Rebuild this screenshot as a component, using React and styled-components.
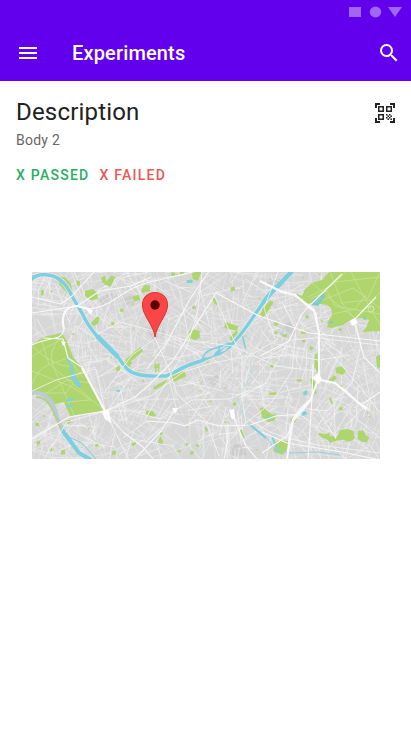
import React from "react";
import styled, { createGlobalStyle } from "styled-components";

const GlobalStyle = createGlobalStyle`
  *, *::before, *::after { box-sizing: border-box; }
  body {
    margin: 0;
    background: #ffffff;
    font-family: Roboto, "Liberation Sans", sans-serif;
  }
`;

const AppHeader = styled.header`
  background: #6200ee;
  color: #ffffff;
`;

const StatusBar = styled.div`
  display: flex;
  justify-content: flex-end;
  align-items: center;
  height: 24px;
  padding-right: 9px;
`;

const Toolbar = styled.div`
  display: flex;
  align-items: center;
  height: 57px;
  padding: 0 10px 0 16px;
`;

const IconButton = styled.button`
  display: flex;
  flex: none;
  padding: 0;
  border: 0;
  background: none;
  color: inherit;
  cursor: pointer;
`;

const Icon = styled.svg`
  display: block;
  width: 24px;
  height: 24px;
  fill: currentColor;
`;

const Title = styled.h1`
  flex: 1;
  margin: 0 0 0 32px;
  font-size: 20px;
  line-height: 24px;
  font-weight: 500;
  letter-spacing: 0.15px;
`;

const Summary = styled.section`
  display: flex;
  align-items: flex-start;
  justify-content: space-between;
  padding: 15px 14px 0 16px;
  color: #212121;
`;

const ScanButton = styled(IconButton)`
  margin-top: 5px;
`;

const Heading = styled.h2`
  margin: 0;
  font-size: 24px;
  line-height: 32px;
  font-weight: 400;
  letter-spacing: 0.18px;
`;

const Body = styled.p`
  margin: 2px 0 0;
  font-size: 14px;
  line-height: 20px;
  letter-spacing: 0.25px;
  color: #666666;
`;

const Results = styled.div`
  display: flex;
  gap: 10px;
  margin-top: 17px;
`;

const Result = styled.span`
  font-size: 14px;
  line-height: 16px;
  font-weight: 500;
  letter-spacing: 1.25px;
  color: ${({ $failed }) => ($failed ? "#eb5757" : "#27ae60")};
`;

const MapSection = styled.section`
  padding: 89px 31px 32px 32px;
`;

const MapDrawing = styled.svg`
  display: block;
  width: 100%;
  height: auto;
`;

/* Deterministic noise so that the street grid is the same on each visit. */
function makeRandom(seed) {
  let s = seed;
  return () => {
    s = (s * 16807) % 2147483647;
    return s / 2147483647;
  };
}

function streets(seed, count, spread) {
  const rnd = makeRandom(seed);
  let d = "";
  for (let i = 0; i < count; i += 1) {
    const x = rnd() * 348;
    const y = rnd() * 187;
    const district = Math.sin(x / 46 + seed) + Math.cos(y / 34);
    const angle = district * 0.8 + (rnd() < 0.5 ? 0 : Math.PI / 2) + (rnd() - 0.5) * spread;
    const half = 5 + rnd() * 17;
    const dx = Math.cos(angle) * half;
    const dy = Math.sin(angle) * half;
    d += `M${(x - dx).toFixed(1)} ${(y - dy).toFixed(1)}L${(x + dx).toFixed(1)} ${(y + dy).toFixed(1)}`;
  }
  return d;
}

function gardens() {
  const rnd = makeRandom(911);
  let d = "";
  for (let i = 0; i < 60; i += 1) {
    const w = 0.7 + rnd() * 1.2;
    d += `M${(rnd() * 345).toFixed(1)} ${(rnd() * 184).toFixed(1)}l${w.toFixed(1)} -.7l.6 ${w.toFixed(1)}l-${w.toFixed(1)} .5z`;
  }
  return d;
}

const FINE_STREETS = streets(37, 1150, 0.7);
const STREETS = streets(83, 220, 1.1);
const GARDENS = gardens();

/* Parks and ponds are drawn at three units to a map unit, sheet by sheet. */
const SHEETS = [
  {
    at: "-2 -4",
    parks:
      "M80 25L105 28L122 44L129 78L118 82L88 50ZM214 28l12-4 3 18-13 3zM246 22l10 6-14 28-22-8zM165 68l23-5 14 12 2 18-22 4-17-12zM306 86l20-6 6 16-20 4zM35 64l7 4-2 16-8-4zM199 147l10 1-5 19-15 8-6-9zM334 64l11-14 15 3v17l-24 5zM286 275l44-38 10 12-48 40zM270 122h11v9h-11zM138 39l10-2 3 13-9 3zM243 165l9-5 2 12-9 1z",
    water: "M107 270l6-2 12 20h-7z",
  },
  {
    at: "114 -4",
    parks:
      "M138 12h28l-10 26-16-4zM198 88l8 2 10 16-3 6-9-7zM139 114l10 1v8l-10 1zM129 190l13-6 19 5v21l-14 7-19-9zM238 162l39 13-4 13-38-8zM253 59l12-4 3 11-12 5zM250 210l22-23 5 7-22 26zM342 138l18-24v22l-12 11zM75 13l13 1-1 12-11-2zM102 10l14 1-4 8-10 3zM25 286h5v4h5v-4h5v14h-5v-6h-5v6h-5z",
    water: "M122 36h18v9h-18zM287 205l5-2 9 37-5 2z",
  },
  {
    at: "230 -4",
    parks:
      "M0 123L25 96L35 104L10 142L0 149ZM104 76l18 10-5 13-11-8zM145 234l9 4-4 9-8-3zM158 260l9-6v45h-10zM342 266l13-7v40h-10zM205 158l11 8-7 14-14-2zM116 190h16v7h-16zM230 180l11 2-3 7-9-1zM131 142l10 1-2 10-9-3zM35 164l15-3-3 12-9 1zM60 200l16-3-4 9-11 1zM120 216h10v7h-10zM38 190l9 2-2 8-9-3z",
    water: "",
  },
  {
    at: "-2 90",
    parks:
      "M257 18l11-8 4 12-12 8zM281 0h26l-8 15-8-4zM348 148l13 2v12l-9 1zM15 184l12-2 1 10-12 1zM109 175l13-2 2 9-12 3zM245 268l12-3 2 12-13 3zM18 240l11-5 2 10-9 5zM58 260l8-4 2 10-9 3zM93 266l11-4 2 14-12 3zM150 30l20 6 4 18-12 2zM197 245l9 1-3 9-8-2zM304 244l16-5-4 11-10 2z",
    water:
      "M119 8l8-1 5 28 23 35-11 7-21-28zM108 112l23-4-2 8-20 3zM110 129l18-2-1 8-17 1zM259 84h12v5h-12z",
  },
  {
    at: "114 90",
    parks:
      "M73 45L115 26L121 43L83 60ZM21 76l43-24 3 7-41 25zM0 146l22 2 8 13-9 4-21-7zM35 242l8-20 8 16-1 8zM281 205l7-2 8 24-5 2zM261 121l11 2-2 9-10-2zM174 195l9 2 4 10-7 2zM27 7h5v7h4V7h4v24h-4V18h-4v13h-5zM342 139l11-3 7 8v25l-12-4zM151 247l8 1-2 8-7-2zM132 269l12-2-2 10-9 1zM120 243l6 1-1 7-7-1zM97 264l8 1-2 8-6-2zM42 214l10-4-3 8-7 2z",
    water: "",
  },
  {
    at: "230 90",
    parks:
      "M220 17l20-5 12 15-10 12-20-6zM198 55l20-15 7 9-13 11zM159 0h9v30l-6-6zM145 52l12-3 7 45-9 4zM0 139l15 7 16 12 11-2-4 20-22 4-16-16zM85 171l11-8 10 7-7 12-13-4zM38 244l16-10 26 4v17l-18 23-25-8-4-9 11-6zM170 212l20 5 10-4 5 10 10-1 6 9 8-15 5-12 21-3 20 5 3 25-16 8-20-6-19 3-18 6-12-11-13-4-10-8zM288 207l16-2 9 16 9 5-7 15-16-2-12-9zM201 108l5-2 8 20-5 2zM230 138l12-5v12h-11zM19 92l26-1-3 9-20-2zM24 10l10-4 1 11-10-1zM103 52h18l-4 8-13-3zM230 69l10 1 3 9-9 2z",
    water: "M124 90l10-6 3 10-7 7-6-3zM117 151l14-4 5 9-12 5-9-2zM34 224l17 45-5 2-18-45zM14 164l13-1 2 7-12 3z",
  },
];

const SEINE =
  "M-2 9C3 3 10 2 16 3C28 4 35 13 40 24C44 32 49 38 53 47C57 55 63 62 69 69L86 85C92 93 96 101 105 102C115 105 126 104 134 104C145 100 150 94 169 89C184 82 190 79 199 73C211 62 220 46 231 31Q239 20 247 13L261 -2";

const MAIN_ROADS = [
  "M0 73C17 64 30 70 32 57C29 45 32 34 45 34L57 37C79 36 91 16 118 10L165 -1",
  "M11 66L31 67L36 86L51 96L58 111L73 139L91 160L111 175L122 188",
  "M0 167L37 145L73 139L103 125L117 113L140 90L184 21L227 44L277 61L348 69",
  "M228 9L247 18L263 23L276 35L284 41L287 61L287 105L278 129L270 140L258 153L255 188",
  "M284 107L303 111L315 119L326 131L337 138",
  "M329 133L348 120",
  "M114 149L142 151L153 154L166 148L187 154L218 153L244 144L270 142",
  "M200 141L207 158L214 174L225 187L234 188",
  "M196 152L196 167L192 188",
  "M142 139L129 159L115 174L102 188",
  "M0 41L45 34L68 19L99 14L119 5",
  "M0 25L29 32L40 24L62 0",
  "M115 97L134 72L158 27L178 -2",
  "M228 84L257 69L270 42L276 35L310 2",
  "M230 181L255 164L266 139L277 128",
  "M230 160L255 171L310 180L348 188",
  "M281 92L280 126L276 188",
  "M323 47L344 25M322 49L332 85L348 101",
];

const MINOR_ROADS = [
  "M0 119L24 108L64 97L73 139L97 188M12 187L35 150L73 139L119 124L151 100L180 91L217 84L246 67",
  "M94 0L112 26L123 66L137 97L145 122L174 149L187 184M66 62L88 50L114 57L153 68L201 74L244 94L284 99",
  "M170 0L166 38L155 75L128 121L114 146M181 20L196 56L210 85L210 126L214 151M250 30L264 58L260 99L239 131L214 151",
  "M218 148L238 160L255 166L286 173L348 181M207 126L233 112L257 68L284 66L348 73M284 64L330 117L348 141",
  "M75 140L90 118L99 105M73 139L99 139L128 147L160 128L197 127L235 111M124 66L100 83L72 121",
  "M231 86L256 83L287 88L318 83M246 0L232 36L243 67M322 46L329 72L320 111L295 139L277 137",
];

const PARK_PATHS =
  "M0 85L15 75L31 66M0 112Q5 98 16 93L36 86L52 107M9 67L17 92L73 139M0 99L40 115L59 128L33 130M27 67Q16 80 21 93T42 143M50 98L34 121L12 121M0 74Q19 93 39 95M13 122L35 108L58 111M276 25L299 14L314 0M280 11L301 29L324 47M298 0L310 31L323 47L348 20M303 10L348 5M309 31L335 28L348 0M291 28L321 16L348 36M319 0L331 23L348 53M301 42L323 37L334 23M278 27L295 19L303 34L348 42";

function CityMap() {
  return (
    <MapDrawing viewBox="0 0 348 187" role="img" aria-label="City map with a location pin">
      <defs>
        <clipPath id="map-bounds">
          <rect width="348" height="187" />
        </clipPath>
      </defs>
      <g clipPath="url(#map-bounds)" fill="none" strokeLinejoin="round">
        <rect width="348" height="187" fill="#d7d7d7" />
        <path
          d="M67 28l12-9 7 7-14 8zM113 55l16-4 5 12-13 5zM244 58l13-8 9 8-13 9zM176 107l10-5 2 9-8 3zM202 171l11 2 3 10-17 1zM89 28l10-5 3 8-9 4zM234 11l14-5 3 7-12 5z"
          fill="#cccccc"
        />
        <path d={FINE_STREETS} stroke="#ececec" strokeWidth="0.5" />
        <path d={STREETS} stroke="#f3f3f3" strokeWidth="0.7" />
        <path d={GARDENS} fill="#b5d77b" />
        <path
          d="M0 73L11 65L30 61L35 69L41 85L48 93L55 107L65 123L71 139L38 144L32 130L19 133L11 123L0 120Z"
          fill="#afd66e"
        />
        <path
          d="M270 24L273 17L280 11L290 8L298 -1H349V59L330 60L334 56L337 48L330 46L320 47L311 53L300 56L295 51L300 43L299 36L295 33L280 31L272 32Z"
          fill="#afd66e"
        />
        <path d={PARK_PATHS} stroke="#cde39f" strokeWidth="0.7" />
        {SHEETS.map(({ at, parks, water }) => (
          <g key={at} transform={`translate(${at}) scale(0.3333)`}>
            <path d={parks} fill="#afd66e" />
            <path d={water} fill="#82d0d9" />
          </g>
        ))}
        <path d="M0 121C15 119 22 131 25 145L31 159" stroke="#b9cdd0" strokeWidth="4" />
        <path d="M4 125C18 124 22 143 29 157" stroke="#b5ce91" strokeWidth="2" />
        <path d="M30 158L39 170L47 181L59 188" stroke="#7ccfe0" strokeWidth="4" />
        <path d="M37 165L50 171L64 187" stroke="#7ccfe0" strokeWidth="1" />
        <path d={SEINE} stroke="#e8e8e8" strokeWidth="5" />
        <path d={SEINE} stroke="#7bcfe0" strokeWidth="3.4" />
        <path d="M0 4Q14 -1 23 6T39 19" stroke="#83d1df" strokeWidth="1" />
        <path d="M65 64L86 85M231 31Q239 20 247 13L261 -2" stroke="#7bcfe0" strokeWidth="4.6" />
        <path d="M170 87Q173 78 184 76L198 71L199 75L189 82L171 87M184 83L188 75" stroke="#7bcfe0" strokeWidth="1.4" />
        <path d="M173 86L180 79L185 78L181 84ZM188 80L192 76L197 74L193 79Z" fill="#dddddd" />
        <path d="M218 90L220 101L212 116L206 127L212 145L217 152" stroke="#bcdde0" strokeWidth="1" />
        <path d="M217 152L234 165L242 176L257 181L286 180L308 183" stroke="#91d3df" strokeWidth="1" />
        <path d="M217 152L234 166" stroke="#7bcfe0" strokeWidth="2" />
        <path d="M280 29L285 25L293 21L292 26L286 34L279 33ZM297 49L302 50L299 52ZM331 47L333 44L334 48Z" fill="#7bcbd1" />
        <path d="M283 31L290 25" stroke="#b5d77b" strokeWidth="1" />
        {MINOR_ROADS.map((road) => (
          <path key={road} d={road} stroke="#f5f5f5" strokeWidth="0.8" />
        ))}
        {MAIN_ROADS.map((road) => (
          <path key={road} d={road} stroke="#f8f8f8" strokeWidth="1.1" />
        ))}
        <path
          d="M32 57C29 45 32 34 45 34L57 37M50 96L73 139L79 151M228 9L250 20L263 23L282 38L287 61L287 105L278 129L261 147L255 187M284 107L303 111L334 137"
          stroke="#fafafa"
          strokeWidth="2"
        />
        <path
          d="M53 36L61 38L59 43ZM29 69L34 70L31 74ZM69 139L77 137L79 151L73 147ZM280 106L286 101L290 107L287 112ZM197 138L202 137L203 145L200 148ZM140 136L146 136L143 142ZM325 129L338 137L329 134ZM318 49L323 46L326 51L320 54Z"
          fill="#fdfdfd"
        />
        <circle cx="339" cy="37" r="3" stroke="#d8e9b4" strokeWidth="1" />
        <path
          d="M123 65C121 52 111 44 110.500 34C110 26 115 20.500 123 20.500S136 26 135.500 34C135 44 125 52 123 65Z"
          fill="#fc4546"
          stroke="#d73534"
          strokeWidth="1"
        />
        <circle cx="123" cy="33" r="4.7" fill="#590000" />
      </g>
    </MapDrawing>
  );
}

function StatusIcons() {
  return (
    <svg width="54" height="12" viewBox="0 0 54 12" fill="#a066f6" aria-hidden="true">
      <path d="M1 1h12v10H1z" />
      <ellipse cx="27.500" cy="6" rx="5.800" ry="5.400" />
      <path d="M40 1h14l-7 10z" />
    </svg>
  );
}

export default function App() {
  return (
    <>
      <GlobalStyle />
      <AppHeader>
        <StatusBar>
          <StatusIcons />
        </StatusBar>
        <Toolbar>
          <IconButton type="button" aria-label="Open menu">
            <Icon viewBox="0 0 24 24">
              <path d="M3 18h18v-2H3v2zm0-5h18v-2H3v2zm0-7v2h18V6H3z" />
            </Icon>
          </IconButton>
          <Title>Experiments</Title>
          <IconButton type="button" aria-label="Search">
            <Icon viewBox="0 0 24 24">
              <path d="M15.5 14h-.79l-.28-.27A6.47 6.47 0 0 0 16 9.5 6.5 6.5 0 1 0 9.5 16c1.61 0 3.09-.59 4.23-1.57l.27.28v.79l5 4.99L20.49 19l-4.99-5zm-6 0C7.01 14 5 11.99 5 9.5S7.01 5 9.5 5 14 7.01 14 9.5 11.99 14 9.5 14z" />
            </Icon>
          </IconButton>
        </Toolbar>
      </AppHeader>
      <main>
        <Summary>
          <div>
            <Heading>Description</Heading>
            <Body>Body 2</Body>
            <Results>
              <Result>X PASSED</Result>
              <Result $failed>X FAILED</Result>
            </Results>
          </div>
          <ScanButton type="button" aria-label="Scan QR code">
            <Icon viewBox="0 0 24 24">
              <path d="M9.5 6.5v3h-3v-3h3M11 5H5v6h6V5zm-1.5 9.5v3h-3v-3h3M11 13H5v6h6v-6zm6.5-6.5v3h-3v-3h3M19 5h-6v6h6V5zm-6 8h1.5v1.5H13V13zm1.5 1.5H16V16h-1.5v-1.5zM16 13h1.5v1.5H16V13zm-3 3h1.5v1.5H13V16zm1.5 1.5H16V19h-1.5v-1.5zM16 16h1.5v1.5H16V16zm1.5-1.5H19V16h-1.5v-1.5zm0 3H19V19h-1.5v-1.5zM22 7h-2V4h-3V2h5v5zm0 15v-5h-2v3h-3v2h5zM2 22h5v-2H4v-3H2v5zM2 2v5h2V4h3V2H2z" />
            </Icon>
          </ScanButton>
        </Summary>
        <MapSection>
          <CityMap />
        </MapSection>
      </main>
    </>
  );
}
